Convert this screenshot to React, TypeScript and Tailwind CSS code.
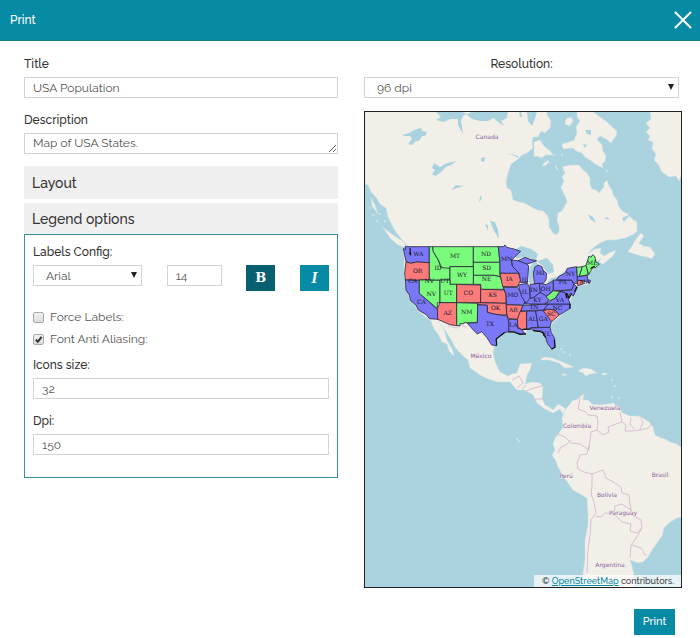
import type { ReactNode } from "react";

const BLUE = "#7b78f8";
const RED = "#fb7b7b";
const GREEN = "#7bfb7b";

const states: [string, string][] = [
  [BLUE, "42,65 40,56 47,58 45,50 118,50 118,98 80,96 62,100 48,95"],
  [RED, "48,95 62,100 80,96 118,98 118,150 46,150 44,130"],
  [BLUE, "46,150 88,152 88,190 142,238 145,268 118,266 110,255 85,240 78,225 62,212 58,195 48,180"],
  [GREEN, "88,150 150,150 150,218 142,218 142,236 88,190"],
  [GREEN, "118,50 128,50 130,65 145,90 152,112 180,112 180,150 118,150"],
  [GREEN, "128,50 250,50 250,110 180,110 180,115 155,113 145,90 130,65"],
  [GREEN, "250,50 325,50 330,97 250,97"],
  [GREEN, "250,97 330,97 330,140 312,136 250,136"],
  [GREEN, "250,136 312,136 330,140 338,160 342,178 272,178 272,163 250,163"],
  [GREEN, "180,110 250,110 250,163 180,163"],
  [GREEN, "150,150 180,150 180,163 200,163 200,218 150,218"],
  [RED, "200,163 272,165 272,218 200,218"],
  [RED, "150,218 200,218 200,287 180,284 143,268 142,236"],
  [GREEN, "200,218 263,220 262,278 222,278 222,281 210,281 210,287 200,287"],
  [RED, "272,178 342,180 348,192 348,220 272,218"],
  [RED, "263,218 348,220 350,255 330,255 310,252 292,247 292,226 263,224"],
  [BLUE, "263,224 292,226 292,247 310,252 330,255 352,258 357,280 357,305 342,308 328,320 318,328 320,347 305,345 290,322 275,305 262,312 250,300 232,280 262,278"],
  [BLUE, "325,50 340,50 345,45 350,52 372,57 392,64 365,90 365,105 388,130 330,130 330,97"],
  [RED, "330,130 385,130 392,150 382,170 338,170 335,155"],
  [BLUE, "340,172 382,172 390,185 398,200 405,215 400,226 350,224 348,192"],
  [RED, "350,224 398,226 392,245 382,268 355,266 350,250"],
  [BLUE, "356,268 382,268 384,295 400,298 398,304 408,312 390,312 372,306 357,305"],
  [RED, "390,245 410,243 410,298 395,298 384,292 382,268"],
  [BLUE, "410,243 437,243 445,292 422,293 422,298 410,298"],
  [BLUE, "437,243 462,240 485,270 480,292 445,292"],
  [BLUE, "422,294 480,292 484,308 494,325 495,352 485,357 472,340 466,318 456,303 442,304 428,300"],
  [RED, "460,243 475,237 495,240 508,255 485,275"],
  [BLUE, "460,240 475,222 540,222 540,235 520,248 508,255 495,240 475,237"],
  [BLUE, "400,226 475,222 460,240 392,243"],
  [BLUE, "403,222 410,205 430,203 450,187 470,194 478,208 465,222"],
  [BLUE, "465,222 480,212 500,200 515,180 532,195 540,222"],
  [GREEN, "468,200 482,190 490,182 508,184 504,192 495,205 480,212"],
  [BLUE, "448,160 470,164 490,152 490,180 470,198 450,187"],
  [BLUE, "420,163 448,160 450,187 430,203 420,205"],
  [BLUE, "385,165 412,160 418,172 420,205 408,220 395,200"],
  [BLUE, "365,90 385,92 410,100 416,108 412,158 392,158 388,130 368,110"],
  [BLUE, "433,160 430,130 434,112 444,105 456,110 460,122 470,130 468,150 460,160"],
  [BLUE, "385,92 405,82 420,88 440,92 425,98 410,102"],
  [BLUE, "490,150 545,150 552,165 545,180 490,182"],
  [BLUE, "500,150 505,140 525,130 532,115 560,110 562,140 562,160 550,160 545,150"],
  [BLUE, "545,180 552,162 562,172 550,198 540,190 535,205 525,188 508,184"],
  [GREEN, "560,112 577,110 568,140 562,140"],
  [GREEN, "577,110 590,106 594,134 568,140"],
  [GREEN, "588,106 597,78 603,82 608,74 615,80 617,95 628,102 618,112 608,114 596,134"],
  [BLUE, "562,140 592,136 592,148 602,152 600,158 578,152 562,151"],
  [RED, "562,151 578,152 580,162 563,167"],
];

const stateLabels: [string, number, number][] = [
  ["WA", 85, 71], ["OR", 83, 121], ["CA", 68, 153], ["NV", 118, 153], ["UT", 164, 153],
  ["ID", 144, 112], ["MT", 195, 76], ["ND", 288, 70], ["SD", 290, 114], ["NE", 290, 147],
  ["WY", 216, 133], ["NV", 124, 190], ["UT", 175, 187], ["CO", 235, 188], ["KS", 308, 195],
  ["CA", 94, 215], ["AZ", 173, 247], ["NM", 230, 246], ["OK", 317, 232], ["TX", 300, 280],
  ["MN", 350, 87], ["IA", 358, 145], ["MO", 368, 193], ["IL", 405, 150], ["IL", 405, 185],
  ["IN", 432, 180], ["OH", 467, 175], ["MI", 451, 127], ["PA", 518, 155], ["NY", 542, 132],
  ["ME", 607, 99], ["AR", 370, 240], ["LA", 370, 285], ["AL", 427, 265], ["GA", 460, 267],
  ["SC", 484, 250], ["NC", 502, 232], ["TN", 432, 229], ["KY", 442, 208], ["VA", 510, 208],
  ["FL", 470, 312], ["MA", 584, 156],
];

const countries: [string, number, number][] = [
  ["Canada", 487, 139], ["México", 481, 358], ["Venezuela", 605, 410], ["Colombia", 577, 428],
  ["Perú", 566, 478], ["Brasil", 660, 477], ["Bolivia", 607, 497], ["Paraguay", 623, 515],
  ["Argentina", 610, 567],
];

// Land masses as closed outlines
const land = [
  // North and Central America, joined to South America at Panama
  "365,111 547,111 547,115 551,121 550,128 545,133 541,131 538,137 533,137 532,144 533,148 527,153 522,155 517,160 511,164 508,173 506,182 507,188 511,190 513,200 519,202 524,203 530,206 537,210 543,211 547,215 549,220 549,227 553,233 556,235 559,232 559,227 557,220 558,213 562,211 564,207 567,202 566,198 563,192 561,187 564,181 562,177 565,173 562,167 570,165 579,165 582,169 587,173 590,178 590,184 592,189 596,190 599,193 604,187 604,183 607,180 609,186 612,190 613,195 617,200 618,205 622,211 628,214 631,218 637,222 637,231 634,234 625,238 615,240 607,240 600,243 593,248 587,254 595,249 601,248 600,253 604,256 611,252 616,250 613,256 603,264 599,262 601,258 596,263 594,269 588,275 587,280 592,282 588,284 578,286 574,292 571,298 570,303 570,308 564,313 558,318 553,322 550,328 554,337 555,348 551,348 547,340 545,334 540,331 532,329 527,329 526,334 519,333 512,331 505,332 498,338 495,344 493,353 495,362 500,372 508,376 512,374 517,373 520,364 532,363 530,370 527,375 525,384 532,382 540,383 543,387 542,398 545,405 549,407 553,410 558,404 565,408 565,427 563,414 560,409 553,413 545,409 537,403 533,395 530,393 524,390 517,390 510,382 498,382 488,379 480,375 470,368 468,360 461,354 455,347 450,338 445,330 438,321 443,327 445,333 447,340 451,347 453,351 454,356 449,351 447,344 442,342 438,334 434,329 431,321 427,318 418,311 415,305 410,300 405,285 404,270 404,252 410,248 405,243 399,236 394,229 391,223 388,217 386,208 380,204 376,197 371,192 368,185 365,184",
  // South America
  "565,410 570,404 572,401 578,399 581,396 584,394 583,400 588,400 592,404 600,405 607,404 614,403 617,408 623,413 630,416 638,416 643,418 649,422 653,427 655,435 661,438 665,439 670,442 677,444 682,448 682,517 677,518 670,522 664,528 662,536 657,543 652,550 648,557 643,562 638,563 630,560 632,566 634,575 634,588 583,588 583,573 585,560 585,540 588,525 588,513 587,498 580,494 573,490 568,483 562,474 558,467 556,461 552,455 555,450 553,444 555,438 559,433 563,427 562,418",
  // Baffin
  "577,111 592,111 600,117 606,121 611,126 617,131 616,136 611,143 606,139 600,136 597,139 602,145 603,151 606,156 605,161 602,164 603,168 595,164 590,160 585,157 582,153 576,151 573,148 563,149 562,144 569,142 574,140 577,133 576,127 580,121 577,117",
  "534,142 540,140 544,146 551,152 553,155 546,155 541,158 537,156 534,157",
  "542,165 548,160 549,162 545,166", "566,119 571,117 573,121 570,126 565,124",
  // Greenland
  "650,111 682,111 682,174 679,181 676,176 669,177 662,172 658,164 654,160 656,154 652,149 653,142 648,140 650,136 646,132 650,128 646,123 651,119",
  // Newfoundland
  "641,233 644,236 639,243 643,246 650,247 655,254 652,259 647,257 641,256 632,253 628,252 632,246 636,239",
  // Caribbean
  "540,360 544,357 552,358 560,361 567,364 574,367 565,368 559,363 549,360",
  "578,371 583,368 591,369 597,373 590,374 586,376 583,373", "562,374 566,374 566,376 562,375", "602,373 607,373 606,375 602,375",
  "383,227 389,232 396,237 404,242 407,248 398,245 390,238", "371,198 375,205 378,214 372,206",
];

const water = [
  "435,111 459,111 468,114 472,111 508,111 507,118 501,121 504,126 498,122 494,118 488,121 480,121 472,119 466,114 463,116 461,121 463,134 458,125 458,119 450,119 444,122 436,120 441,117",
  "527,111 537,111 535,119 532,126 528,121", "519,111 521,111 522,117 520,117",
  "402,135 409,133 414,130 421,128 422,131 427,132 425,136 422,136 419,141 416,141 412,145 408,144 412,139 410,136 405,136",
  "432,174 435,170 432,168 434,163 440,167 447,163 457,161 451,165 446,167 440,173 435,176",
  "451,190 456,185 464,186 457,188", "479,202 480,197 482,195 481,200",
  "481,158 485,157 484,162 481,161", "490,221 495,222 498,230 499,239 494,231",
  "485,224 488,225 488,231", "585,130 591,130 591,135 587,134", "583,144 587,145 585,148",
  "622,218 631,214 624,222", "604,218 608,217 609,220", "588,214 593,217 596,223 590,219",
  "508,153 518,156 519,158",
  // Great Lakes
  "513,251 521,246 531,249 538,254 536,260 529,258 523,257 517,259",
  "529,282 528,271 532,264 536,261 538,264 534,272 533,282 530,284",
  "537,261 547,258 553,265 554,272 549,274 545,270 543,266 540,264",
  "546,284 551,278 557,277 564,272 568,269 565,276 556,281 550,284",
];

const borders = [
  "580,398 578,409 586,412 588,415 597,416 598,422 597,430 591,432 590,440 589,450 580,444 571,443 565,437 557,434",
  "597,430 603,435 609,432 608,427 616,424 622,422 620,412",
  "622,422 626,425 625,431 632,431 640,430 648,428 652,424",
  "631,418 630,424 634,429", "641,418 643,423 640,429",
  "571,440 566,445 561,447 558,453", "589,445 587,454 580,455 577,463 578,469 584,472 592,474 592,486 591,494 594,502 596,513 591,520 590,535 588,550 587,573",
  "592,474 603,470 606,478 615,483 621,487 622,493 629,495 630,504 631,510 622,504 615,506 614,514 605,513 601,517 596,516",
  "614,514 622,522 631,524 630,531 637,533 642,528 641,520 632,515 631,510",
  "642,528 636,538 631,545 630,558", "632,545 641,548 646,556",
  "512,380 519,376 523,383 517,388", "526,385 522,389", "526,391 534,388 542,386", "534,399 543,399",
  "448,326 457,328 462,325 467,328",
];

const speckles: [number, number][] = [
  [370, 208], [373, 215], [377, 221], [380, 214], [385, 221], [562, 155], [556, 167], [557, 169], [607, 171],
  [573, 120], [554, 155], [564, 352], [570, 355], [561, 349], [612, 380], [615, 386], [619, 398], [612, 397], [517, 439], [519, 441],
];

function MapPreview() {
  return (
    <svg viewBox="365 112 316 475" className="block h-auto w-full bg-[#aad3df]" role="img" aria-label="Map preview">
      <g fill="#f2efe9" stroke="#cfe0e2" strokeWidth="0.6" strokeLinejoin="round">
        {land.map((p) => <polygon key={p} points={p} />)}
        {speckles.map(([x, y]) => <circle key={`${x}-${y}`} cx={x} cy={y} r="0.8" />)}
      </g>
      <g fill="#aad3df">
        {water.map((p) => <polygon key={p} points={p} />)}
      </g>
      <g fill="none" stroke="#d3b3cc" strokeWidth="0.8" strokeLinejoin="round">
        {borders.map((p) => <polyline key={p} points={p} />)}
      </g>
      <g transform="translate(390 230) scale(0.33333)">
        <g stroke="#25253a" strokeWidth="2.4" strokeLinejoin="round">
          {states.map(([fill, p]) => <polygon key={p} points={p} fill={fill} />)}
        </g>
        <g fill="none" stroke="#111" strokeWidth="3.5" strokeLinecap="round" strokeLinejoin="round">
          <path d="M60 55l2 20-4-6M320 345l-1-18 12-10 12-9M357 306l15 0 18 7 16-1M400 298l20-1M430 302l18 2 10 4 8 14M493 330l2 22-9 5M540 222l0 13M530 190l8 14 6-12M560 172l-6 12M527 192l3 12M603 115l10-6" />
        </g>
        <g fill="#15152a" fontSize="18" textAnchor="middle" className="font-['DejaVu_Serif',serif]">
          {stateLabels.map(([t, x, y]) => <text key={`${t}-${y}`} x={x} y={y + 7}>{t}</text>)}
        </g>
      </g>
      <g fill="#8a5f9c" fontSize="6" textAnchor="middle" stroke="#f2efe9" strokeWidth="1" paintOrder="stroke" className="font-['DejaVu_Sans',sans-serif]">
        {countries.map(([t, x, y]) => <text key={t} x={x} y={y}>{t}</text>)}
      </g>
    </svg>
  );
}

const field = "block h-[21px] w-full rounded-none border border-[#d4d4d4] bg-white px-2 text-xs leading-[18px] text-[#555] outline-none";
const caption = "mb-[3px] block text-xs leading-5 font-medium";

function Field({ id, label, children }: { id: string; label: string; children: ReactNode }) {
  return (
    <div className="mb-3">
      <label htmlFor={id} className={caption}>{label}</label>
      {children}
    </div>
  );
}

function Select({ id, value }: { id: string; value: string }) {
  return (
    <div className="relative">
      <select id={id} className={`${field} appearance-none pl-3`}>
        <option>{value}</option>
      </select>
      <svg viewBox="0 0 6 6" className="pointer-events-none absolute top-[7px] right-[5px] size-[6px]" aria-hidden="true">
        <path d="M0 0h6L3 6z" fill="#222" />
      </svg>
    </div>
  );
}

function Check({ id, label, checked }: { id: string; label: string; checked?: boolean }) {
  return (
    <div className="flex items-center gap-[6px] text-xs leading-[22px] text-[#555]">
      <span className="relative size-[11px]">
        <input id={id} type="checkbox" defaultChecked={checked} className="peer block size-[11px] appearance-none rounded-[2px] border border-[#aaa] bg-linear-to-b from-[#f2f2f2] to-[#dcdcdc]" />
        <svg viewBox="0 0 11 11" className="pointer-events-none absolute inset-0 hidden size-[11px] peer-checked:block" aria-hidden="true">
          <path d="M2.8 5.6l2 2.2L8.6 2.8" fill="none" stroke="#333" strokeWidth="2" />
        </svg>
      </span>
      <label htmlFor={id}>{label}</label>
    </div>
  );
}

export default function App() {
  return (
    <div className="bg-white font-[Raleway,Lato,sans-serif] text-[#333]">
      <header className="flex h-[41px] items-center justify-between border-b border-[#0b7d91] bg-[#078aa3] pr-2 pl-[10px] text-white">
        <h1 className="text-xs leading-5 font-medium">Print</h1>
        <button aria-label="Close" className="block">
          <svg viewBox="0 0 18 18" className="size-[18px]" fill="none" stroke="currentColor" strokeWidth="2">
            <path d="M1 1l16 16M17 1L1 17" />
          </svg>
        </button>
      </header>

      <main className="grid grid-cols-[314fr_318fr] gap-x-[26px] pt-[13px] pr-[18px] pl-6">
        <form>
          <Field id="title" label="Title">
            <input id="title" defaultValue="USA Population" className={field} />
          </Field>
          <Field id="description" label="Description">
            <textarea id="description" rows={1} defaultValue="Map of USA States." className={`${field} overflow-hidden`} />
          </Field>

          <button type="button" className="mb-1 block h-[33px] w-full bg-[#f0f0f0] px-2 text-left text-sm font-medium">Layout</button>
          <button type="button" className="block h-[31px] w-full bg-[#f0f0f0] px-2 text-left text-sm font-medium">Legend options</button>

          <section className="border border-[#3a8fa0] px-2 pt-[7px] pb-[10px]">
            <label htmlFor="font" className={caption}>Labels Config:</label>
            <div className="mb-[15px] flex items-start justify-between">
              <div className="w-[109px]"><Select id="font" value="Arial" /></div>
              <div className="w-[55px]"><input aria-label="Font size" defaultValue="14" className={field} /></div>
              <button type="button" aria-pressed="true" aria-label="Bold" className="h-[26px] w-[29px] bg-[#075f70] font-['DejaVu_Serif',serif] text-[13px] font-bold text-white">B</button>
              <button type="button" aria-label="Italic" className="h-[26px] w-[29px] bg-[#078aa3] font-['Liberation_Serif',serif] text-base font-bold text-white italic">I</button>
            </div>
            <Check id="force" label="Force Labels:" />
            <Check id="antialias" label="Font Anti Aliasing:" checked />
            <div className="pt-[5px]">
              <Field id="icons" label="Icons size:">
                <input id="icons" defaultValue="32" className={field} />
              </Field>
              <Field id="dpi" label="Dpi:">
                <input id="dpi" defaultValue="150" className={field} />
              </Field>
            </div>
          </section>
        </form>

        <div>
          <div className="mb-[13px] pr-[3px]">
            <label htmlFor="resolution" className={`${caption} text-center`}>Resolution:</label>
            <Select id="resolution" value="96 dpi" />
          </div>
          <div className="relative border border-[#222]">
            <MapPreview />
            <div className="absolute right-0 bottom-0 bg-white/70 pr-[7px] pl-2 text-[9px] leading-3 font-medium whitespace-nowrap text-[#444]">
              © <a href="#osm" className="text-[#078aa3] underline">OpenStreetMap</a> contributors.
            </div>
          </div>
        </div>
      </main>

      <footer className="flex justify-end pt-[21px] pr-[25px]">
        <button className="h-[26px] w-[41px] bg-[#078aa3] text-[11px] font-medium text-white">Print</button>
      </footer>
    </div>
  );
}
